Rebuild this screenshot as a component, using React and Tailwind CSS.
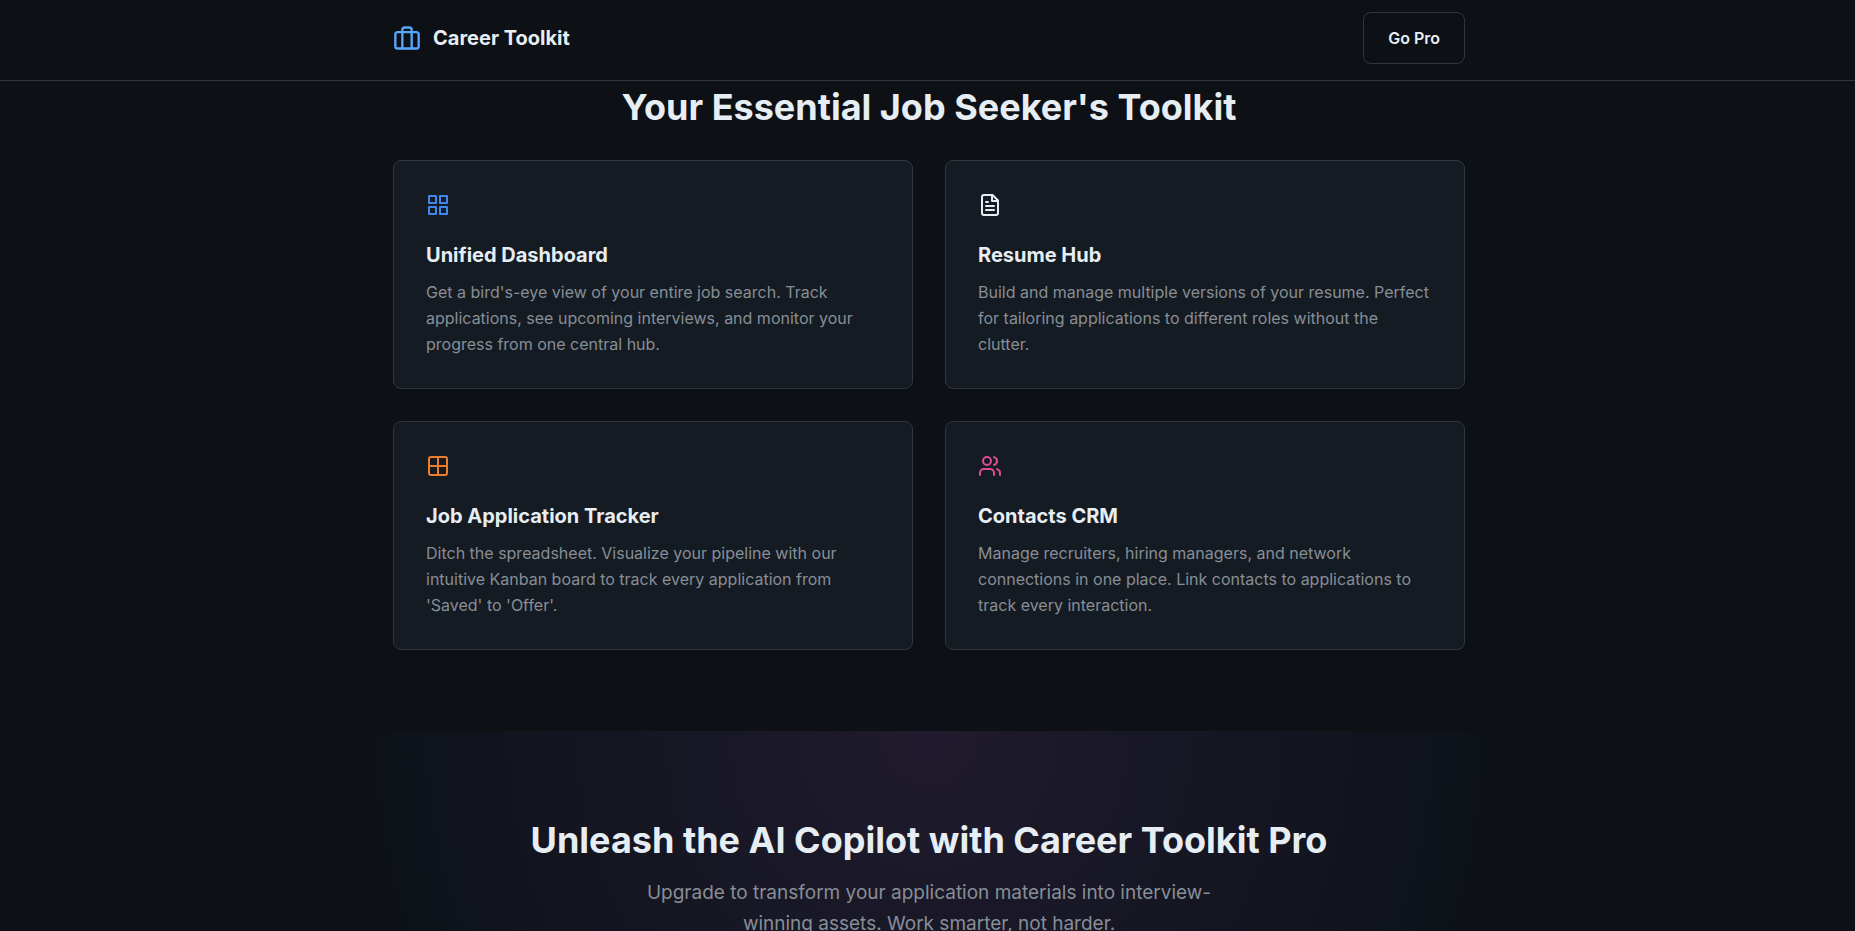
import React from "react";

// ICONS
const Icon = ({ className, children }) => (
  <svg
    viewBox="0 0 24 24"
    fill="none"
    stroke="currentColor"
    strokeWidth="2"
    strokeLinecap="round"
    strokeLinejoin="round"
    aria-hidden="true"
    className={className}
  >
    {children}
  </svg>
);

const BriefcaseIcon = () => (
  <Icon className="h-7 w-7 text-[#58a6ff]">
    <rect x="2" y="7" width="20" height="14" rx="2" />
    <path d="M16 21V5a2 2 0 0 0-2-2h-4a2 2 0 0 0-2 2v16" />
  </Icon>
);

const GridIcon = () => (
  <Icon className="h-6 w-6 text-[#3f86ee]">
    <rect x="3" y="3" width="7" height="7" />
    <rect x="14" y="3" width="7" height="7" />
    <rect x="14" y="14" width="7" height="7" />
    <rect x="3" y="14" width="7" height="7" />
  </Icon>
);

const FileIcon = () => (
  <Icon className="h-6 w-6 text-[#e6edf3]">
    <path d="M14.5 2H6a2 2 0 0 0-2 2v16a2 2 0 0 0 2 2h12a2 2 0 0 0 2-2V7.5L14.5 2z" />
    <path d="M14 2v6h6" />
    <path d="M16 13H8" />
    <path d="M16 17H8" />
    <path d="M10 9H8" />
  </Icon>
);

const BoardIcon = () => (
  <Icon className="h-6 w-6 text-[#ee7d2b]">
    <rect x="3" y="3" width="18" height="18" rx="2" />
    <path d="M3 12h18" />
    <path d="M12 3v18" />
  </Icon>
);

const UsersIcon = () => (
  <Icon className="h-6 w-6 text-[#df4c93]">
    <path d="M16 21v-2a4 4 0 0 0-4-4H6a4 4 0 0 0-4 4v2" />
    <circle cx="9" cy="7" r="4" />
    <path d="M22 21v-2a4 4 0 0 0-3-3.87" />
    <path d="M16 3.13a4 4 0 0 1 0 7.75" />
  </Icon>
);

// FEATURES
const features = [
  {
    icon: <GridIcon />,
    title: "Unified Dashboard",
    text: "Get a bird's-eye view of your entire job search. Track applications, see upcoming interviews, and monitor your progress from one central hub.",
  },
  {
    icon: <FileIcon />,
    title: "Resume Hub",
    text: "Build and manage multiple versions of your resume. Perfect for tailoring applications to different roles without the clutter.",
  },
  {
    icon: <BoardIcon />,
    title: "Job Application Tracker",
    text: "Ditch the spreadsheet. Visualize your pipeline with our intuitive Kanban board to track every application from 'Saved' to 'Offer'.",
  },
  {
    icon: <UsersIcon />,
    title: "Contacts CRM",
    text: "Manage recruiters, hiring managers, and network connections in one place. Link contacts to applications to track every interaction.",
  },
];

const FeatureCard = ({ icon, title, text }) => (
  <article className="rounded-lg border border-[#30363b] bg-[#151b22] px-8 pt-8 pb-[31px]">
    {icon}
    <h3 className="mt-[22px] text-xl leading-8 font-bold">{title}</h3>
    <p className="mt-2 text-base leading-[26px] text-[#878e96]">{text}</p>
  </article>
);

const App = () => {
  return (
    <div className="min-h-screen bg-[#0d1014] font-['Inter',sans-serif] text-[#e6edf3]">
      <header className="border-b border-[#30363b] pl-[3px]">
        <div className="mx-auto flex max-w-[1120px] items-center justify-between px-6 pt-3 pb-4">
          <a href="#" className="flex items-center gap-3 text-xl leading-8 font-bold">
            <BriefcaseIcon />
            Career Toolkit
          </a>
          <button
            type="button"
            className="rounded-lg border border-[#30363b] px-6 py-3 text-base leading-[26px] font-semibold"
          >
            Go Pro
          </button>
        </div>
      </header>

      <main className="pl-[3px]">
        <section className="mx-auto max-w-[1120px] px-6 pb-[81px]">
          <h2 className="pb-[26px] text-center text-4xl leading-[53px] font-bold">
            Your Essential Job Seeker's Toolkit
          </h2>
          <div className="grid grid-cols-1 gap-8 md:grid-cols-2">
            {features.map((feature) => (
              <FeatureCard key={feature.title} {...feature} />
            ))}
          </div>
        </section>

        <section className="mx-auto min-h-[600px] max-w-[1120px] bg-[radial-gradient(ellipse_at_top,#201b2e,#0d1219_70%,transparent_71%)] px-6 pt-20 text-center">
          <h2 className="text-4xl leading-[58px] font-bold">
            Unleash the AI Copilot with Career Toolkit Pro
          </h2>
          <p className="mx-auto mt-2 max-w-[600px] text-[19px] leading-[31px] text-[#878e96]">
            Upgrade to transform your application materials into interview-winning assets. Work
            smarter, not harder.
          </p>
        </section>
      </main>
    </div>
  );
};

export default App;
